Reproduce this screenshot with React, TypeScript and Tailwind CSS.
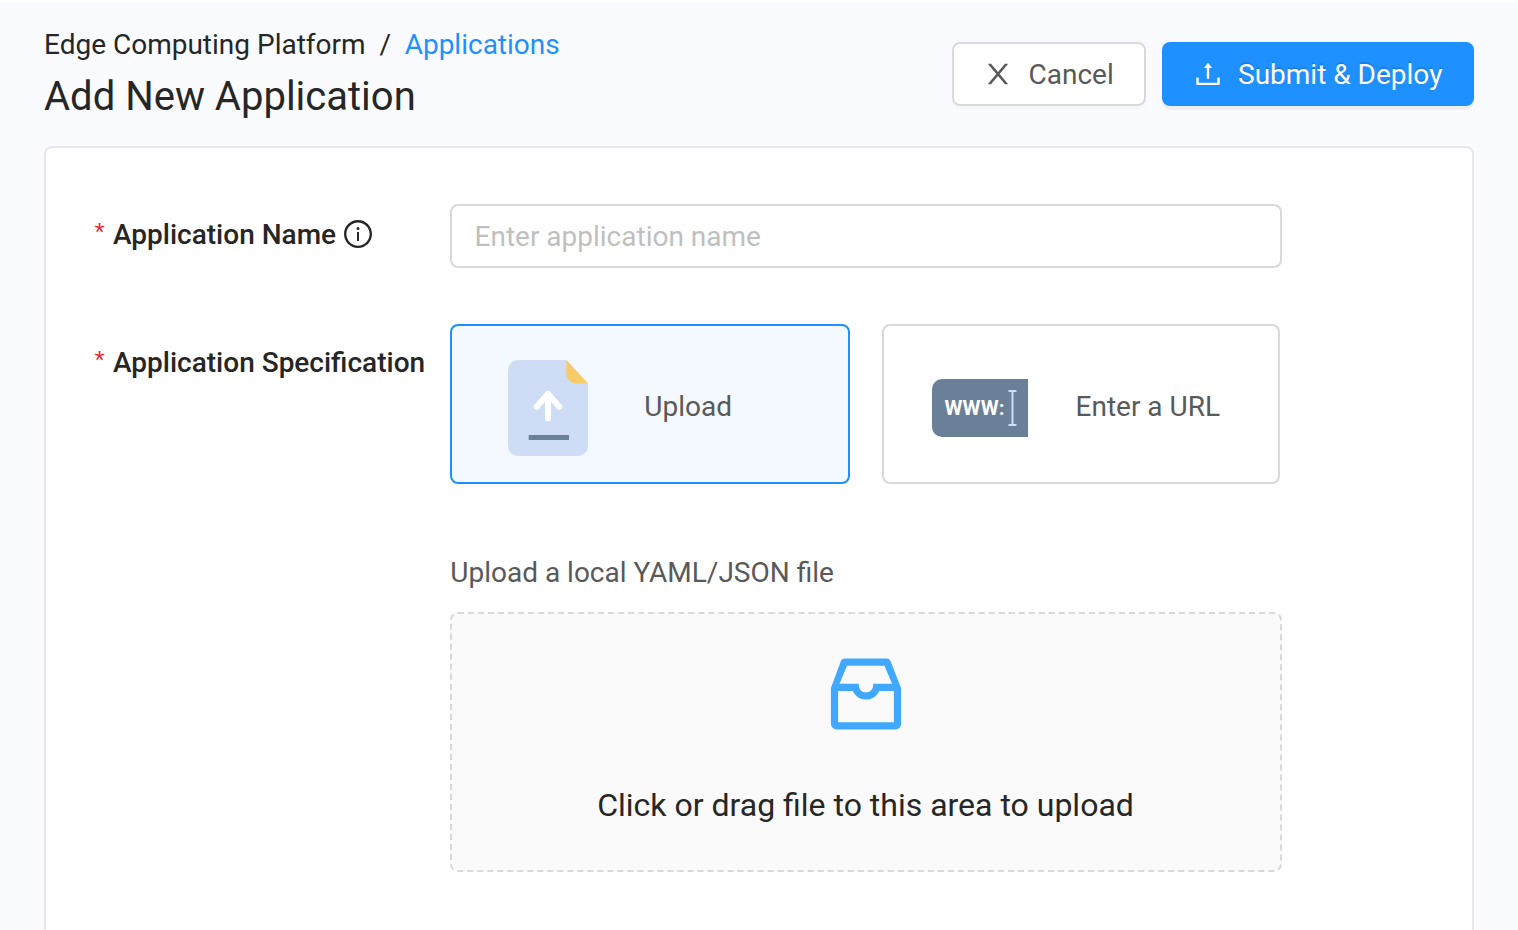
import type { ReactNode } from "react";
import { AiOutlineInbox, AiOutlineInfoCircle, AiOutlineUpload } from "react-icons/ai";

function CloseIcon() {
  return (
    <svg className="mr-[14.5px] size-8 shrink-0" viewBox="0 0 1024 1024" fill="currentColor">
      <path d="M563.8 512l262.5-312.9c4.4-5.2.7-13.1-6.1-13.1h-79.8c-4.7 0-9.200 2.100-12.300 5.700L511.600 449.800 295.100 191.700c-3-3.600-7.500-5.700-12.300-5.700H203c-6.800 0-10.500 7.900-6.100 13.100L459.400 512 196.900 824.900A7.950 7.950 0 0 0 203 838h79.800c4.700 0 9.200-2.100 12.300-5.700l216.500-258.100 216.500 258.100c3 3.600 7.500 5.700 12.300 5.700h79.800c6.800 0 10.500-7.900 6.100-13.100L563.800 512z" />
    </svg>
  );
}

function FileUploadIcon() {
  return (
    <svg width="80" height="96" viewBox="0 0 80 96" fill="none">
      <path d="M10 0H58.500L80 23.500V86a10 10 0 0 1-10 10H10A10 10 0 0 1 0 86V10A10 10 0 0 1 10 0Z" fill="#cfdcf5" />
      <path d="M58.300 0L80 23.500H68.300a10 10 0 0 1-10-10Z" fill="#f7cb67" />
      <path d="M40 58.500V34M28.700 46.800L40 33.800L51.300 46.800" stroke="#fff" strokeWidth="6" strokeLinecap="round" strokeLinejoin="round" />
      <rect x="20.700" y="75" width="40.300" height="5" fill="#6a8098" />
    </svg>
  );
}

function UrlIcon() {
  return (
    <div className="flex h-[58px] w-24 items-center rounded-l-[10px] bg-[#6a8098] pl-[12.5px]">
      <span className="w-[63.5px] text-left text-[20.5px] leading-none font-bold tracking-[0.15px] text-white">WWW:</span>
      <svg width="9" height="38" viewBox="0 0 9 38" stroke="#cfdcf5" strokeWidth="2" fill="none">
        <path d="M0.500 2H8.500M0.500 36H8.500M4.500 2V36" />
      </svg>
    </div>
  );
}

function FieldLabel({ text, children }: { text: string; children?: ReactNode }) {
  return (
    <div className="flex h-[60px] w-[356px] shrink-0 items-center whitespace-nowrap text-[28px] font-medium">
      <span className="mr-2 w-[11px] pb-[5px] pl-[0.5px] font-['Liberation_Sans'] text-[26px] leading-[42px] font-normal text-[#f5222d]">*</span>
      <span className="pt-0.5">{text}</span>
      {children}
    </div>
  );
}

export default function App() {
  return (
    <div className="flex h-[930px] flex-col overflow-hidden border-t-2 border-white bg-[#fafbff] px-11 font-['Roboto',sans-serif] text-[28px] text-[#262626]">
      <header className="flex h-36 shrink-0 justify-between">
        <div className="pt-5">
          <nav className="flex h-[46px] items-center whitespace-pre">
            <span>Edge Computing Platform</span>
            <span className="mr-[13.5px] ml-3.5">/</span>
            <a className="text-[#1e90ff]">Applications</a>
          </nav>
          <h1 className="flex h-14 items-center pt-0.5 text-[40px]">Add New Application</h1>
        </div>
        <div className="flex gap-4 pt-10">
          <button className="flex h-16 w-[194px] items-center rounded-lg border-2 border-[#d9d9d9] bg-white pl-7 text-[#595959] shadow-[0_4px_0_rgba(0,0,0,0.016)]">
            <CloseIcon />
            <span className="pt-0.5">Cancel</span>
          </button>
          <button className="flex h-16 w-[312px] items-center rounded-lg bg-[#1e90ff] pl-[30px] text-white shadow-[0_4px_0_rgba(0,0,0,0.045)] [text-shadow:0_-2px_0_rgba(0,0,0,0.12)]">
            <AiOutlineUpload className="mr-3.5 size-8 shrink-0" />
            <span className="pt-0.5 whitespace-nowrap">Submit &amp; Deploy</span>
          </button>
        </div>
      </header>

      <main className="flex flex-1 flex-col rounded-t-lg border-2 border-b-0 border-[#e8e8e8] bg-white pt-14 pl-12">
        <div className="flex">
          <FieldLabel text="Application Name">
            <AiOutlineInfoCircle className="ml-1.5 size-8" />
          </FieldLabel>
          <input
            className="h-16 w-[832px] rounded-lg border-2 border-[#d9d9d9] bg-white px-[22.5px] outline-none placeholder:text-[#bfbfbf]"
            placeholder="Enter application name"
          />
        </div>

        <div className="mt-14 flex">
          <div className="pt-2">
            <FieldLabel text="Application Specification" />
          </div>
          <div className="flex w-[832px] flex-col text-[#595959]">
            <div className="flex gap-8">
              <button className="flex h-40 w-[400px] items-center gap-14 rounded-lg border-2 border-[#1e90ff] bg-[#f4f8ff] pt-2 pl-14">
                <FileUploadIcon />
                <span className="pb-0.5 pl-[0.3px]">Upload</span>
              </button>
              <button className="flex h-40 w-[398px] items-center rounded-lg border-2 border-[#d9d9d9] bg-white pt-2 pl-12">
                <UrlIcon />
                <span className="ml-[47.5px] pb-0.5">Enter a URL</span>
              </button>
            </div>
            <p className="mt-[67px] flex h-11 items-center pl-[0.3px]">Upload a local YAML/JSON file</p>
            <div className="mt-[17px] flex h-[260px] flex-col items-center rounded-lg border-2 border-dashed border-[#d9d9d9] bg-[#fafafa] pt-8">
              <AiOutlineInbox className="size-24 text-[#40a9ff]" />
              <p className="mt-[39px] pr-px text-[32px] leading-[48px] text-[#262626]">Click or drag file to this area to upload</p>
            </div>
          </div>
        </div>
      </main>
    </div>
  );
}
